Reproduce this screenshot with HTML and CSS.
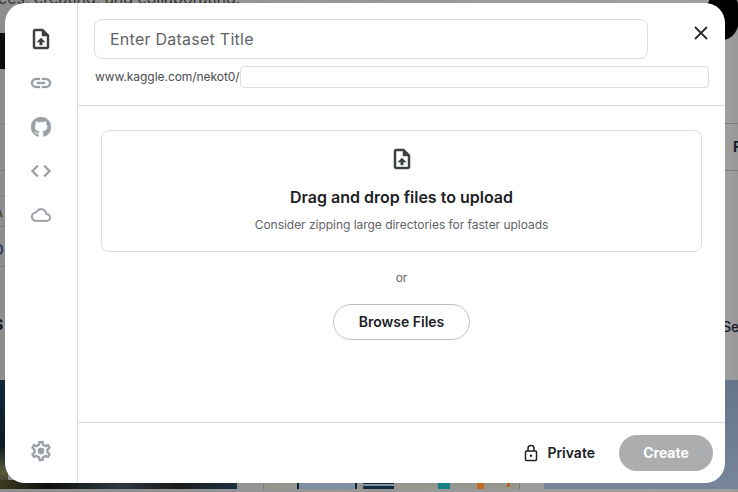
FILE: index.html
```html
<!DOCTYPE html>
<html lang="en">
<head>
<meta charset="utf-8">
<title>Create Dataset</title>
<link rel="stylesheet" href="styles.css">
</head>
<body>
<div class="backdrop" aria-hidden="true">
  <span class="bg-text">ces, creating, and collaborating.</span>
  <span class="bg-block"></span>
  <span class="bg-blob"></span>
  <span class="bg-line l1"></span>
  <span class="bg-line l2"></span>
  <span class="bg-line l3"></span>
  <span class="bg-line l4"></span>
  <span class="bg-line l5"></span>
  <span class="bg-line r1"></span>
  <span class="bg-line r2"></span>
  <span class="bg-letter lf">F</span>
  <span class="bg-letter lse">Se</span>
  <span class="bg-letter la">A</span>
  <span class="bg-letter lo">O</span>
  <span class="bg-letter ls">S</span>
  <span class="bg-img-left"></span>
  <span class="bg-img-bottom"></span>
  <span class="bg-card"></span>
  <span class="bg-thumb t1"></span>
  <span class="bg-thumb t2"></span>
  <span class="bg-thumb t3"></span>
  <span class="bg-thumb t4"></span>
  <span class="bg-thumb t5"></span>
  <span class="bg-img-right"></span>
</div>

<main class="dialog">
  <nav class="sidebar">
    <div class="tabs">
      <button class="tab">
        <svg class="icon dark" viewBox="0 0 24 24"><path d="M14 2H6c-1.1 0-2 .9-2 2v16c0 1.1.9 2 2 2h12c1.100 0 2-.9 2-2V8l-6-6zm4 18H6V4h7v5h5v11z"/><path d="M12 11l-4 4h2.800v3h2.400v-3H16z"/></svg>
      </button>
      <button class="tab">
        <svg class="icon" viewBox="0 0 24 24"><path d="M3.900 12c0-1.710 1.390-3.100 3.100-3.100h4V7H7c-2.760 0-5 2.240-5 5s2.240 5 5 5h4v-1.900H7c-1.710 0-3.100-1.390-3.100-3.100zM8 13h8v-2H8v2zm9-6h-4v1.900h4c1.710 0 3.100 1.390 3.100 3.100s-1.390 3.100-3.100 3.100h-4V17h4c2.760 0 5-2.240 5-5s-2.240-5-5-5z"/></svg>
      </button>
      <button class="tab">
        <svg class="icon small" viewBox="0 0 16 16"><path d="M8 0C3.580 0 0 3.580 0 8c0 3.540 2.290 6.530 5.470 7.590.4.070.55-.17.55-.38 0-.19-.01-.82-.01-1.490-2.010.37-2.530-.49-2.690-.94-.09-.23-.48-.94-.82-1.130-.28-.15-.68-.52-.01-.53.63-.01 1.080.58 1.230.82.72 1.210 1.870.87 2.330.66.07-.52.28-.87.51-1.070-1.780-.2-3.640-.89-3.640-3.950 0-.87.31-1.590.82-2.150-.08-.2-.36-1.020.08-2.120 0 0 .67-.21 2.200.82.64-.18 1.320-.27 2-.27.68 0 1.360.09 2 .27 1.530-1.040 2.200-.82 2.200-.82.44 1.100.16 1.920.08 2.120.51.56.82 1.270.82 2.150 0 3.070-1.870 3.750-3.650 3.950.29.25.54.73.54 1.480 0 1.070-.01 1.930-.01 2.200 0 .21.15.46.55.38A8.013 8.013 0 0016 8c0-4.420-3.580-8-8-8z"/></svg>
      </button>
      <button class="tab">
        <svg class="icon" viewBox="0 0 24 24"><path d="M9.400 16.600L4.800 12l4.600-4.600L8 6l-6 6 6 6 1.400-1.400zm5.200 0l4.600-4.600-4.600-4.600L16 6l6 6-6 6-1.400-1.400z"/></svg>
      </button>
      <button class="tab">
        <svg class="icon small" viewBox="0 0 24 24"><path d="M19.350 10.040C18.670 6.590 15.640 4 12 4 9.110 4 6.600 5.640 5.350 8.040 2.340 8.360 0 10.910 0 14c0 3.310 2.690 6 6 6h13c2.760 0 5-2.240 5-5 0-2.640-2.050-4.780-4.650-4.960zM19 18H6c-2.210 0-4-1.790-4-4 0-2.050 1.530-3.760 3.560-3.970l1.070-.11.5-.95C8.080 7.140 9.940 6 12 6c2.620 0 4.880 1.860 5.390 4.430l.3 1.500 1.530.11c1.560.1 2.780 1.410 2.780 2.960 0 1.650-1.350 3-3 3z"/></svg>
      </button>
    </div>
    <button class="tab">
      <svg class="icon" viewBox="0 0 24 24"><path d="M19.430 12.980c.04-.32.07-.64.07-.98 0-.34-.03-.66-.07-.98l2.110-1.650c.19-.15.24-.42.12-.64l-2-3.460c-.09-.16-.26-.25-.44-.25-.06 0-.12.010-.17.030l-2.490 1c-.52-.4-1.080-.73-1.690-.98l-.38-2.650C14.460 2.180 14.250 2 14 2h-4c-.25 0-.46.18-.49.42l-.38 2.650c-.61.25-1.170.59-1.690.98l-2.490-1c-.06-.02-.12-.03-.18-.03-.17 0-.34.09-.43.25l-2 3.460c-.13.22-.07.49.12.64l2.110 1.650c-.04.32-.07.65-.07.98 0 .33.03.66.07.98l-2.110 1.650c-.19.15-.24.42-.12.64l2 3.460c.09.16.26.25.44.25.06 0 .12-.01.17-.03l2.490-1c.52.4 1.080.73 1.690.98l.38 2.650c.03.24.24.42.49.42h4c.25 0 .46-.18.49-.42l.38-2.650c.61-.25 1.170-.59 1.690-.98l2.490 1c.06.02.12.03.18.03.17 0 .34-.09.43-.25l2-3.460c.12-.22.07-.49-.12-.64l-2.110-1.650zm-1.980-1.710c.04.31.05.52.05.73 0 .21-.02.43-.05.73l-.14 1.130.89.7 1.080.84-.7 1.210-1.270-.51-1.040-.42-.9.68c-.43.32-.84.56-1.250.73l-1.060.43-.16 1.130-.2 1.350h-1.400l-.19-1.350-.16-1.130-1.060-.43c-.43-.18-.83-.41-1.230-.71l-.91-.7-1.060.43-1.270.51-.7-1.210 1.080-.84.89-.7-.14-1.130c-.03-.31-.05-.54-.05-.74s.02-.43.05-.73l.14-1.130-.89-.7-1.080-.84.7-1.210 1.270.51 1.040.42.9-.68c.43-.32.84-.56 1.250-.73l1.060-.43.16-1.130.2-1.350h1.390l.19 1.350.16 1.130 1.060.43c.43.18.83.41 1.230.71l.91.7 1.060-.43 1.270-.51.7 1.210-1.070.85-.89.7.14 1.130z"/><circle cx="12" cy="12" r="3.200"/></svg>
    </button>
  </nav>

  <section class="content">
    <header class="head">
      <input class="title-input" type="text" placeholder="Enter Dataset Title">
      <button class="close" aria-label="Close">
        <svg viewBox="0 0 14 14" class="close-icon"><path d="M1 1l12 12M13 1L1 13"/></svg>
      </button>
      <div class="url-row">
        <span class="url-prefix">www.kaggle.com/nekot0/</span>
        <input class="url-input" type="text">
      </div>
    </header>

    <div class="body">
      <div class="dropzone">
        <svg class="icon dark" viewBox="0 0 24 24"><path d="M14 2H6c-1.100 0-2 .9-2 2v16c0 1.100.9 2 2 2h12c1.100 0 2-.9 2-2V8l-6-6zm4 18H6V4h7v5h5v11z"/><path d="M12 11l-4 4h2.800v3h2.400v-3H16z"/></svg>
        <h2 class="drop-title">Drag and drop files to upload</h2>
        <p class="drop-sub">Consider zipping large directories for faster uploads</p>
      </div>
      <span class="or">or</span>
      <button class="browse">Browse Files</button>
    </div>

    <footer class="foot">
      <div class="private">
        <svg class="lock" viewBox="0 0 16 18"><rect x="2.500" y="7" width="11" height="9.500" rx="1"/><path d="M5 7V4.500a3 3 0 0 1 6 0V7"/><circle class="lock-dot" cx="8" cy="11.800" r="1.200"/></svg>
        <span class="private-label">Private</span>
      </div>
      <button class="create">Create</button>
    </footer>
  </section>
</main>
</body>
</html>
```

FILE: styles.css
```css
* { box-sizing: border-box; }

html, body {
  margin: 0;
  width: 738px;
  height: 492px;
  overflow: hidden;
}

body {
  position: relative;
  font-family: Inter, "Liberation Sans", sans-serif;
  color: #202124;
  background: linear-gradient(90deg, #8e8e8e 0, #8e8e8e 20px, #a0a0a0 725px, #989898 738px);
}

/* dimmed page behind the dialog */
.backdrop { position: absolute; inset: 0; overflow: hidden; }
.backdrop span { position: absolute; display: block; }
.bg-text { left: -2px; top: -14px; font-size: 16px; line-height: 24px; color: #333; white-space: nowrap; }
.bg-block { left: 0; top: 33px; width: 8px; height: 36px; background: #0b0b0b; }
.bg-blob { left: 706px; top: -10px; width: 34px; height: 50px; border-radius: 50%; background: #000; }
.bg-line { height: 1px; background: #7c7c7c; }
.l1 { left: 0; top: 123px; width: 10px; }
.l2 { left: 0; top: 170px; width: 10px; }
.l3 { left: 0; top: 195px; width: 10px; }
.l4 { left: 0; top: 226px; width: 10px; }
.l5 { left: 0; top: 266px; width: 10px; }
.r1 { left: 720px; top: 123px; width: 18px; }
.r2 { left: 720px; top: 170px; width: 18px; }
.bg-letter { font-size: 14px; line-height: 18px; font-weight: 500; color: #161b2a; }
.lf { left: 733px; top: 138px; font-weight: 700; }
.lse { left: 722px; top: 318px; }
.la { left: -7px; top: 203px; color: #4a3c26; }
.lo { left: -7px; top: 241px; color: #232560; }
.ls { left: -6px; top: 316px; color: #111; font-weight: 700; }
.bg-img-left { left: 0; top: 380px; width: 8px; height: 109px; background: linear-gradient(180deg, #13283a, #0e1b28 60%, #5a5a38 85%, #2a2a1e); }
.bg-img-bottom { left: 0; top: 480px; width: 237px; height: 9px; background: linear-gradient(90deg, #3c3a20, #0d0d0c 20%, #2e3a40 50%, #1a1a1c 75%, #1d3240); }
.bg-card { left: 263px; top: 480px; width: 257px; height: 9px; background: #96968e; border-left: 1px solid #7c7c7c; border-right: 1px solid #7c7c7c; }
.bg-thumb { top: 480px; height: 9px; }
.t1 { left: 297px; width: 60px; background: #7e90a2; border: 2px solid #0f2236; border-top: 0; border-bottom: 0; }
.t2 { left: 363px; width: 31px; background: linear-gradient(180deg, #12293f 0 4px, #8393a0 4px 6px, #12293f 6px); }
.t3 { left: 438px; width: 12px; background: #16808a; }
.t4 { left: 477px; width: 7px; background: #c46a24; }
.t5 { left: 507px; width: 3px; height: 7px; background: #b8602a; }
.bg-img-right { left: 544px; top: 380px; width: 194px; height: 109px; background: linear-gradient(180deg, #66758a, #76859a); }

/* dialog */
.dialog {
  position: absolute;
  left: 5px;
  top: 3px;
  width: 720px;
  height: 480px;
  display: flex;
  background: #fff;
  border-radius: 20px;
  overflow: hidden;
}

.sidebar {
  width: 73px;
  flex: none;
  border-right: 1px solid #dadce0;
  display: flex;
  flex-direction: column;
  justify-content: space-between;
  align-items: center;
  padding: 14px 0 10px;
}

.tabs { display: flex; flex-direction: column; }

.tab {
  width: 44px;
  height: 44px;
  padding: 0;
  border: 0;
  background: none;
  display: flex;
  align-items: center;
  justify-content: center;
}

.icon { width: 24px; height: 24px; fill: #9aa0a6; stroke: #9aa0a6; stroke-width: 0.35; display: block; }
.icon.small { width: 20px; height: 20px; }
.icon.dark { fill: #3c4043; stroke: #3c4043; stroke-width: 0.5; }

.content {
  flex: 1;
  min-width: 0;
  display: flex;
  flex-direction: column;
}

.head {
  height: 103px;
  flex: none;
  border-bottom: 1px solid #dadce0;
  padding: 16px 16px 0;
  display: grid;
  grid-template-columns: 554px 1fr;
  grid-template-rows: 40px 22px;
  row-gap: 7px;
}

.title-input {
  width: 100%;
  height: 40px;
  border: 1px solid #dadce0;
  border-radius: 8px;
  padding: 0 15px;
  font: 400 16px Inter, sans-serif;
  letter-spacing: 0.25px;
  color: #202124;
  background: #fff;
  outline: none;
}

.title-input::placeholder { color: #5f6368; opacity: 1; }

.close {
  justify-self: end;
  align-self: center;
  width: 24px;
  height: 24px;
  margin-right: -4px;
  margin-top: -12px;
  padding: 0;
  border: 0;
  background: none;
  display: flex;
  align-items: center;
  justify-content: center;
}

.close-icon {
  width: 14px;
  height: 14px;
  fill: none;
  stroke: #2a2b2e;
  stroke-width: 1.8;
}

.url-row {
  grid-column: 1 / -1;
  display: flex;
  align-items: center;
  margin: 0 0 0 1px;
  width: 614px;
}

.url-prefix {
  font-size: 12px;
  line-height: 16px;
  color: #4a4d51;
  white-space: nowrap;
  letter-spacing: -0.05px;
}

.url-input {
  flex: 1;
  min-width: 0;
  height: 22px;
  border: 1px solid #dadce0;
  border-radius: 4px;
  background: #fff;
  outline: none;
}

.body {
  flex: 1;
  display: flex;
  flex-direction: column;
  align-items: center;
  padding: 24px 23px 0;
}

.dropzone {
  width: 601px;
  height: 122px;
  border: 1px solid #dadce0;
  border-radius: 8px;
  display: flex;
  flex-direction: column;
  align-items: center;
  padding-top: 16px;
}

.drop-title {
  margin: 16px 0 0;
  font-size: 16px;
  line-height: 20px;
  font-weight: 600;
  color: #202124;
}

.drop-sub {
  margin: 10px 0 0;
  font-size: 12px;
  line-height: 16px;
  color: #5f6368;
  letter-spacing: -0.03px;
}

.or {
  margin-top: 18px;
  font-size: 12px;
  line-height: 16px;
  color: #5f6368;
}

.browse {
  margin-top: 18px;
  width: 137px;
  height: 36px;
  border: 1px solid #bdc1c6;
  border-radius: 18px;
  background: #fff;
  font: 600 14px Inter, sans-serif;
  color: #202124;
  padding: 0 0 1px;
}

.foot {
  height: 61px;
  flex: none;
  border-top: 1px solid #dadce0;
  display: flex;
  align-items: center;
  justify-content: flex-end;
  padding: 0 12px 0 0;
}

.private {
  display: flex;
  align-items: center;
  gap: 8px;
  font-size: 14px;
  font-weight: 600;
  color: #202124;
  margin-right: 24px;
}

.private-label { margin-top: -1px; }

.lock {
  width: 16px;
  height: 18px;
  fill: none;
  stroke: #202124;
  stroke-width: 1.500;
}

.lock-dot { fill: #202124; stroke: none; }

.create {
  width: 94px;
  height: 36px;
  border: 0;
  border-radius: 18px;
  background: #acadae;
  color: #fff;
  font: 700 14px Inter, sans-serif;
  padding: 0 0 1px;
}
```
